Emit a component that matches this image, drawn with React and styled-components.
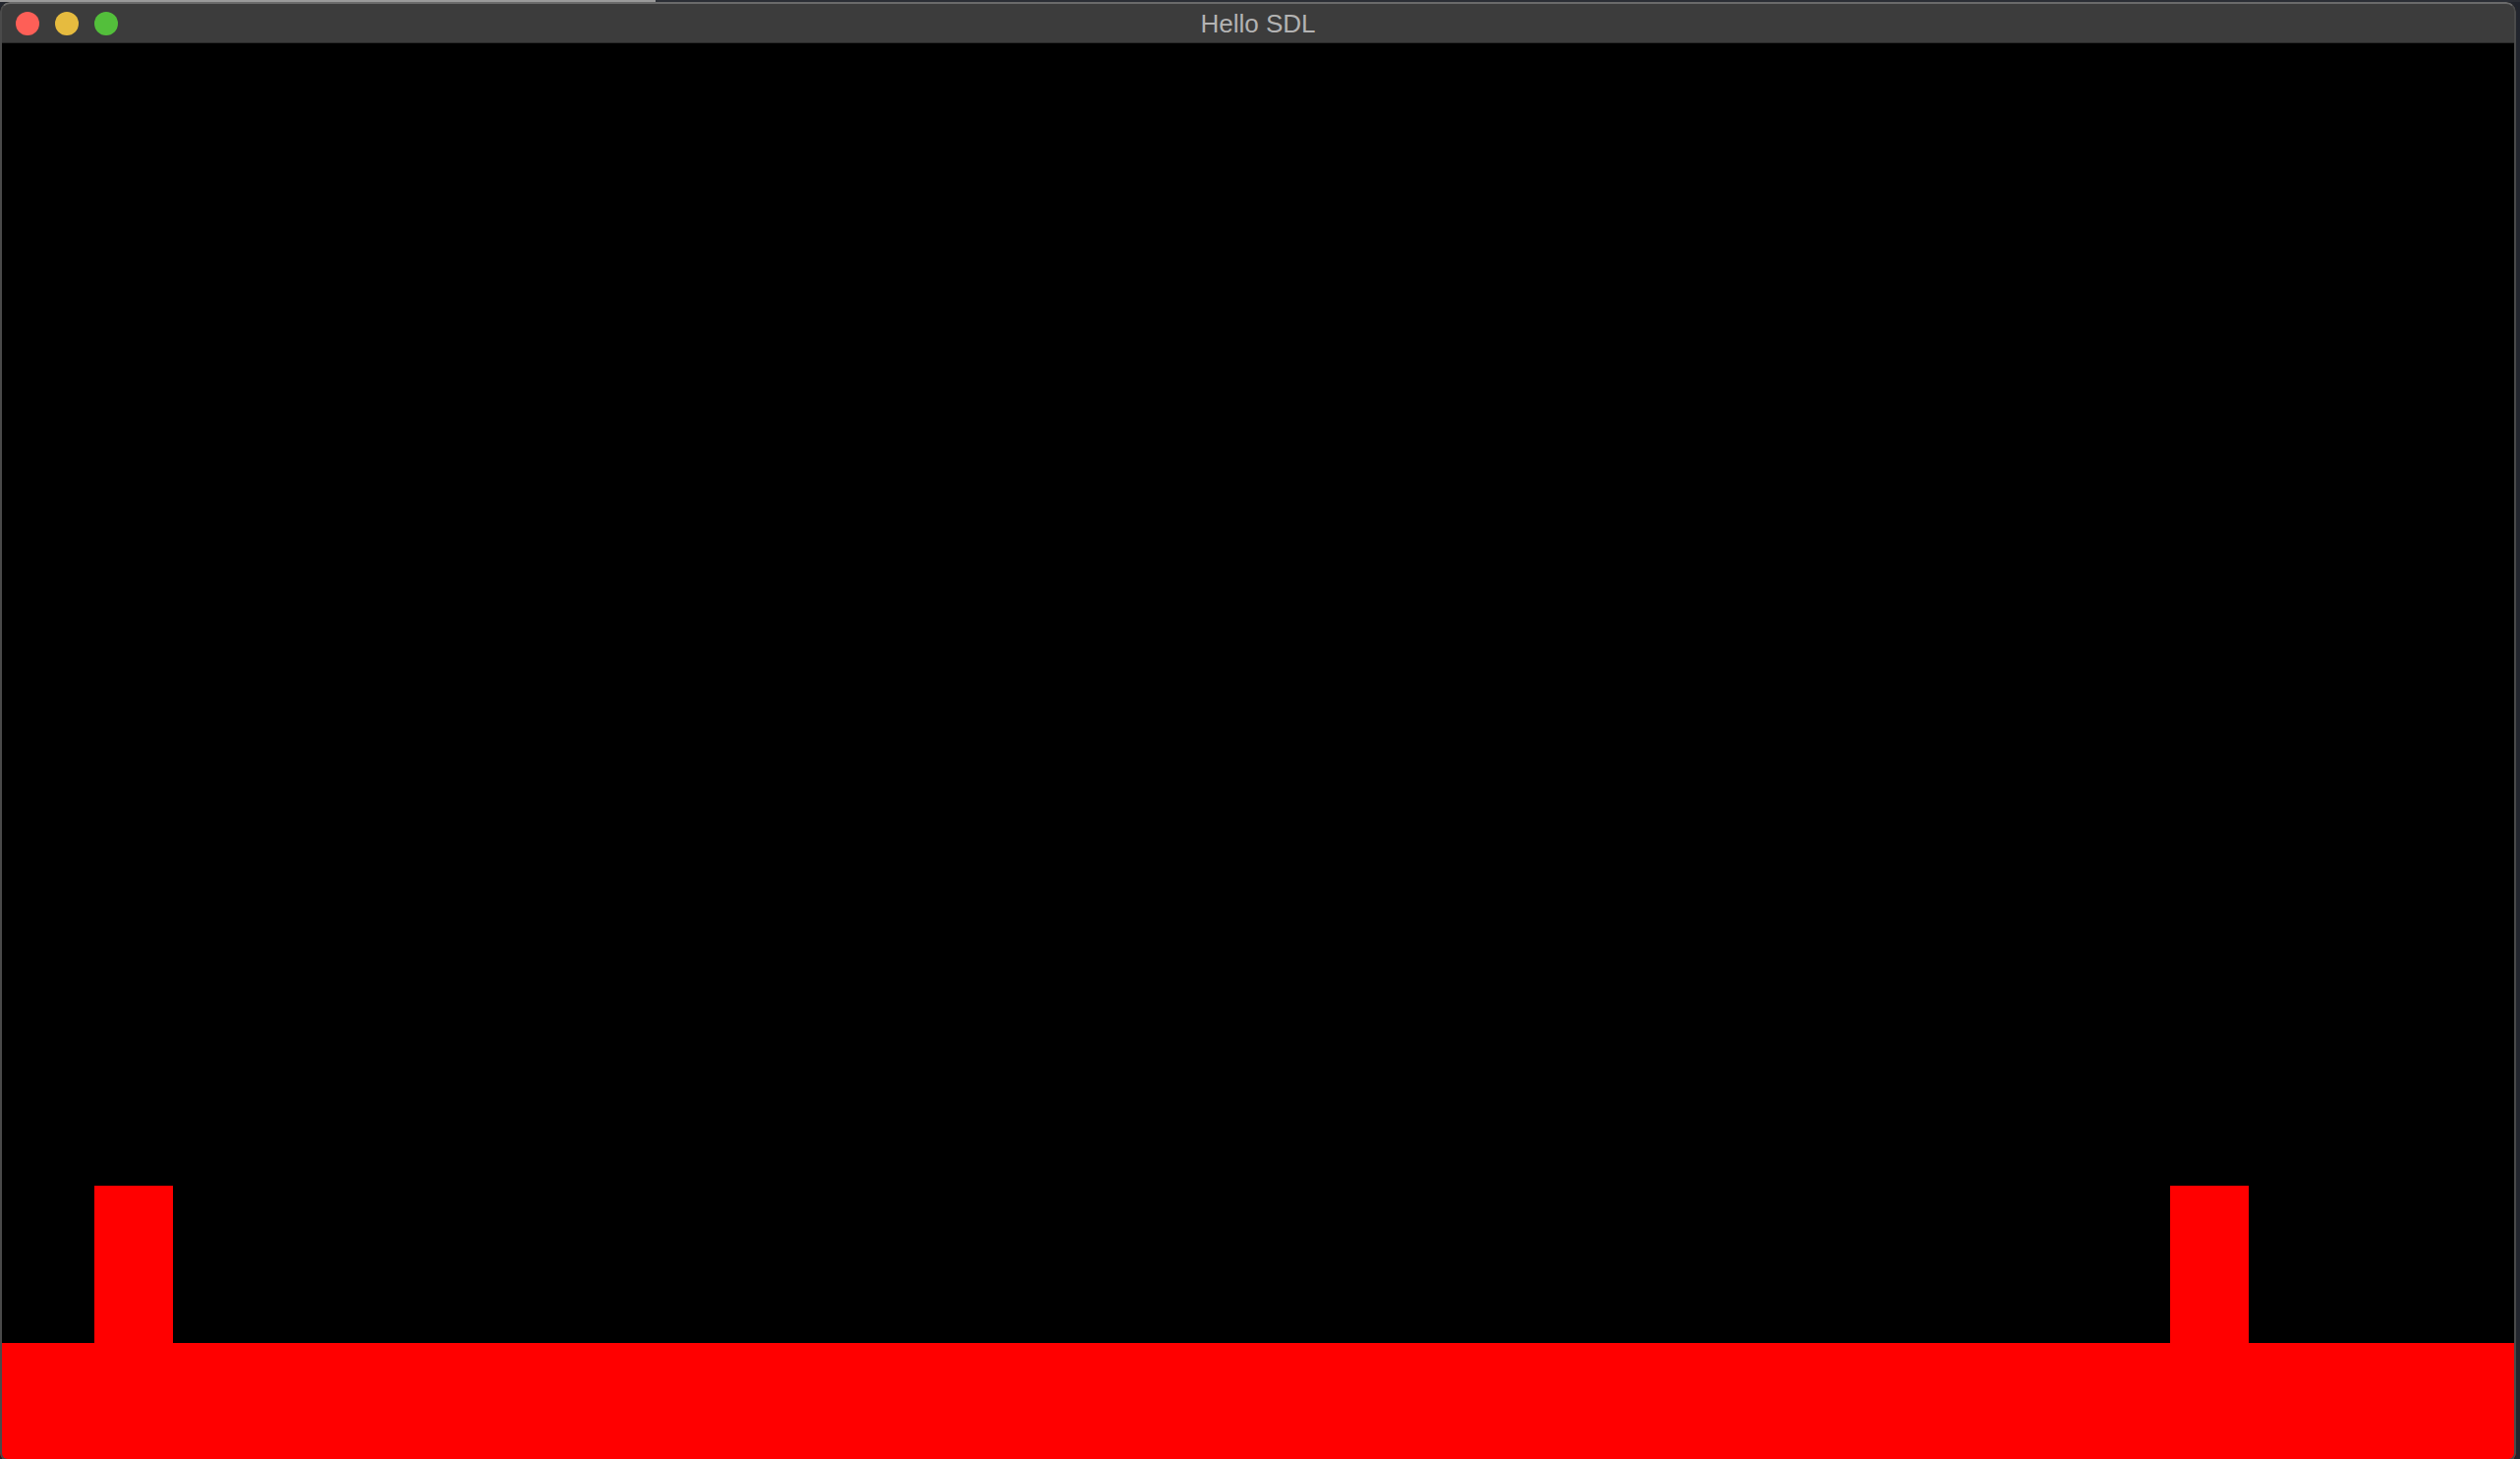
import React from "react";
import styled, { createGlobalStyle } from "styled-components";

const GlobalStyle = createGlobalStyle`
  html, body {
    margin: 0;
    padding: 0;
    background: #22252d;
    overflow: hidden;
  }
`;

const Desk = styled.div`
  width: 2564px;
  height: 1484px;
  padding-top: 2px;
  box-sizing: border-box;
  background: linear-gradient(to right, #9a9a9a 0, #9a9a9a 667px, #2b2e35 667px);
  background-size: 100% 2px;
  background-repeat: no-repeat;
  background-color: #22252d;
`;

const Window = styled.div`
  position: relative;
  width: 2560px;
  height: 1484px;
  display: flex;
  flex-direction: column;
  border-radius: 10px 10px 8px 8px;
  overflow: hidden;
  background: #000;
  &::after {
    content: "";
    position: absolute;
    inset: 0;
    border-radius: inherit;
    border: 2px solid #4a4a4a;
    border-top-color: #6a6a6a;
    pointer-events: none;
  }
`;

const TitleBar = styled.div`
  position: relative;
  flex: 0 0 42px;
  display: flex;
  align-items: center;
  justify-content: center;
  background: #3c3c3c;
  border-bottom: 1px solid #2a2a2a;
  box-sizing: border-box;
`;

const Lights = styled.div`
  position: absolute;
  left: 16px;
  top: 10px;
  display: flex;
  gap: 16px;
`;

const Light = styled.span`
  width: 24px;
  height: 24px;
  border-radius: 50%;
  background: ${(p) => p.color};
`;

const Title = styled.span`
  font-family: "Liberation Sans", Arial, sans-serif;
  font-size: 26px;
  color: #b3b3b3;
  margin-top: 4px;
`;

const Screen = styled.svg`
  display: block;
  width: 2560px;
  height: 1440px;
`;

const blocks = [48, 1104];

export default function App() {
  return (
    <>
      <GlobalStyle />
      <Desk>
        <Window>
          <TitleBar>
            <Lights>
              <Light color="#fe5f57" />
              <Light color="#e6bb3f" />
              <Light color="#53bf3b" />
            </Lights>
            <Title>Hello SDL</Title>
          </TitleBar>
          <Screen viewBox="0 0 1280 720" shapeRendering="crispEdges">
            <rect x="0" y="0" width="1280" height="720" fill="#000" />
            <rect x="0" y="661" width="1280" height="59" fill="#ff0000" />
            {blocks.map((x) => (
              <rect key={`block-${x}`} x={x} y="581" width="40" height="80" fill="#ff0000" />
            ))}
          </Screen>
        </Window>
      </Desk>
    </>
  );
}
